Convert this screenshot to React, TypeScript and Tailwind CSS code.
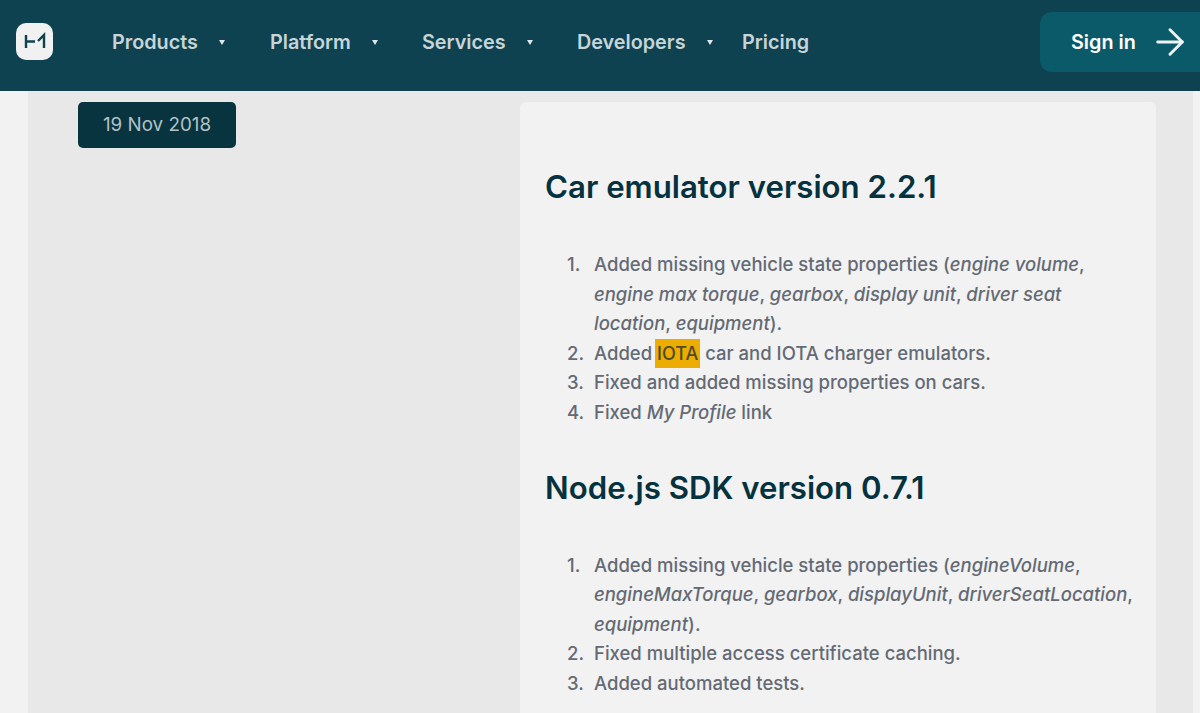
import React from 'react';
import { ArrowRight } from 'lucide-react';

const navItems = [
  { label: 'Products', arrow: true, width: 'w-[158px]' },
  { label: 'Platform', arrow: true, width: 'w-[152px]' },
  { label: 'Services', arrow: true, width: 'w-[155px]' },
  { label: 'Developers', arrow: true, width: 'w-[165px]' },
  { label: 'Pricing', arrow: false, width: '' },
];

function Logo() {
  return (
    <div className="h-[37px] w-[37px] rounded-[10px] bg-[#f1f1f1]">
      <svg width="37" height="37" viewBox="16 23 37 37" fill="none" stroke="#0f4250" strokeWidth="2.4">
        <path d="M26 35v13M26 41.5h9M38 41l6-6v13" />
      </svg>
    </div>
  );
}

function Header() {
  return (
    <header className="flex h-[91px] shrink-0 items-center bg-[#0f4250] pb-2 pl-4">
      <Logo />
      <nav className="ml-[59px] flex flex-1 items-center pt-[2px] text-[19.8px] font-semibold text-[#c6d5d8]">
        {navItems.map((item) => (
          <div key={item.label} className={`flex items-center ${item.width}`}>
            <span>{item.label}</span>
            {item.arrow && <span className="ml-[21px] h-0 w-0 border-x-[3px] border-t-[5px] border-x-transparent border-t-[#dfe7e9]" />}
          </div>
        ))}
      </nav>
      <div className="flex h-[60px] w-[160px] items-center rounded-l-[12px] bg-[#0b5a69] pl-[31px] text-[19.8px] font-semibold text-white">
        <span className="pt-[2px]">Sign in</span>
        <ArrowRight className="ml-[13px]" size={42} strokeWidth={1.7} color="#eef3f4" />
      </div>
    </header>
  );
}

function Item({ n, children }: { n: number; children: React.ReactNode }) {
  return (
    <li className="flex">
      <span className="w-[27px] shrink-0">{n}.</span>
      <div>{children}</div>
    </li>
  );
}

function Release({ title, children }: { title: string; children: React.ReactNode }) {
  return (
    <section>
      <h2 className="text-[31.2px] leading-[44px] font-semibold text-[#05323e]">{title}</h2>
      <ol className="mt-[41px] pl-[22px] text-[18.5px] leading-[29.6px] font-medium text-[#646a74]">
        {children}
      </ol>
    </section>
  );
}

export default function App() {
  return (
    <div className="flex h-[713px] flex-col overflow-hidden bg-[#f2f2f2] font-['Inter',sans-serif]">
      <Header />
      <main className="ml-[28px] mr-[7px] flex flex-1 items-start bg-[#e8e8e8] pl-[50px] pt-[11px]">
        <div className="flex h-[46px] w-[158px] items-center justify-center rounded-[5px] bg-[#07343f] text-[18.8px] text-[#b4c2c6]">
          19 Nov 2018
        </div>
        <article className="ml-[284px] flex w-[636px] flex-col gap-[38px] rounded-t-[6px] bg-[#f2f2f2] pb-[60px] pl-[25px] pr-[20px] pt-[63px]">
          <Release title="Car emulator version 2.2.1">
            <Item n={1}>
              Added missing vehicle state properties (<em>engine volume</em>, <em>engine max torque</em>, <em>gearbox</em>, <em>display unit</em>, <em>driver seat location</em>, <em>equipment</em>).
            </Item>
            <Item n={2}>
              Added <span className="-ml-[2px] bg-[#ecac00] px-[2px] py-[4px] text-[18px] text-[#4f4a2e]">IOTA</span> car and IOTA charger emulators.
            </Item>
            <Item n={3}>Fixed and added missing properties on cars.</Item>
            <Item n={4}>
              Fixed <em>My Profile</em> link
            </Item>
          </Release>
          <Release title="Node.js SDK version 0.7.1">
            <Item n={1}>
              Added missing vehicle state properties (<em>engineVolume</em>, <em>engineMaxTorque</em>, <em>gearbox</em>, <em>displayUnit</em>, <em>driverSeatLocation</em>, <em>equipment</em>).
            </Item>
            <Item n={2}>Fixed multiple access certificate caching.</Item>
            <Item n={3}>Added automated tests.</Item>
          </Release>
        </article>
      </main>
    </div>
  );
}
